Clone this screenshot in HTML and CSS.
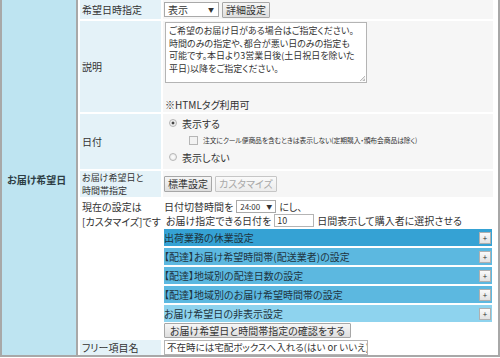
FILE: index.html
```html
<!DOCTYPE html>
<html>

<head>
    <title>お届け希望日</title>
    <link rel="stylesheet" href="styles.css">
</head>

<body>
    <div class="outer">
        <div class="side">お届け希望日</div>
        <div class="inner">
            <div class="label">希望日時指定</div>
            <div class="value row1">
                <span class="select"><span>表示</span><span class="arrow">▼</span></span>
                <button class="btn">詳細設定</button>
            </div>

            <div class="label">説明</div>
            <div class="value row2">
                <div class="memo">ご希望のお届け日がある場合はご指定ください。<br>時間のみの指定や、都合が悪い日のみの指定も<br>可能です。本日より3営業日後(土日祝日を除いた<br>平日)以降をご指定ください。<span class="grip"></span></div>
                <p class="note">※HTMLタグ利用可</p>
            </div>

            <div class="label">日付</div>
            <div class="value row3">
                <label class="opt"><span class="radio on"></span>表示する</label>
                <label class="opt sub"><span class="check"></span>注文にクール便商品を含むときは表示しない(定期購入・頒布会商品は除く)</label>
                <label class="opt"><span class="radio"></span>表示しない</label>
            </div>

            <div class="label two">お届け希望日と<br>時間帯指定</div>
            <div class="value row4">
                <button class="btn">標準設定</button>
                <button class="btn off">カスタマイズ</button>
            </div>

            <div class="label plain two">現在の設定は<br>[カスタマイズ]です</div>
            <div class="value plain row5">
                <div class="line">日付切替時間を <span class="select small"><span>24:00</span><span class="arrow">▼</span></span> にし、</div>
                <div class="line second">お届け指定できる日付を <span class="field">10</span> 日間表示して購入者に選択させる</div>
                <div class="bar active">出荷業務の休業設定<span class="plus">+</span></div>
                <div class="bar">【配達】お届け希望時間帯(配送業者)の設定<span class="plus">+</span></div>
                <div class="bar">【配達】地域別の配達日数の設定<span class="plus">+</span></div>
                <div class="bar">【配達】地域別のお届け希望時間帯の設定<span class="plus">+</span></div>
                <div class="bar light">お届け希望日の非表示設定<span class="plus">+</span></div>
                <button class="btn wide">お届け希望日と時間帯指定の確認をする</button>
            </div>

            <div class="label">フリー項目名</div>
            <div class="value plain row6">
                <span class="field long">不在時には宅配ボックスへ入れる(はい or いいえ)</span>
            </div>
        </div>
    </div>
</body>

</html>
```

FILE: styles.css
```css
body {
    margin: 0;
    background-color: #fff;
    font-family: "Noto Sans CJK JP", sans-serif;
    font-size: 10px;
    font-feature-settings: "palt";
    color: #333;
}

.outer {
    display: flex;
    width: 496px;
    height: 355px;
    border: 2px solid #a8a8a8;
    border-top: none;
}

.side {
    width: 76px;
    background-color: #bee4f1;
    border-right: 2px solid #a8a8a8;
    display: flex;
    align-items: center;
    padding: 4px 0 0 5px;
    box-sizing: border-box;
    font-weight: bold;
    color: #2d3d44;
}

.inner {
    flex: 1;
    display: grid;
    grid-template-columns: 81px 330px;
    grid-template-rows: 19px 91px 55px 26px 139px 15px;
    gap: 2px;
    padding: 0 2px;
}

.label {
    background-color: #e4f2f8;
    display: flex;
    align-items: center;
    padding-left: 2px;
    line-height: 13px;
}

.label.two {
    font-size: 9px;
    line-height: 13px;
}

.label.plain {
    background: none;
    align-items: flex-start;
    font-size: 10px;
    line-height: 15px;
}

.value {
    background-color: #f6f6f6;
    padding: 0 1px;
}

.value.plain {
    background: none;
}

.row1,
.row4 {
    display: flex;
    align-items: center;
    gap: 3px;
}

.select {
    display: inline-flex;
    align-items: center;
    justify-content: space-between;
    width: 55px;
    height: 15px;
    box-sizing: border-box;
    padding: 0 4px 0 3px;
    background-color: #fff;
    border: 1px solid #a9a9a9;
    line-height: 13px;
}

.select .arrow {
    font-size: 6px;
}

.select.small {
    width: 40px;
    height: 13px;
    font-size: 8px;
    padding: 0 3px;
}

.btn {
    font-family: inherit;
    font-size: 10px;
    font-feature-settings: "palt";
    color: #333;
    height: 16px;
    padding: 0 3px;
    line-height: 12px;
    background: linear-gradient(#f6f6f6, #dedede);
    border: 1px solid #a7a7a7;
    border-radius: 1px;
}

.btn.off {
    color: #a8a8a8;
    border-color: #c6c6c6;
    background: linear-gradient(#fafafa, #ececec);
}

.row2 {
    padding-top: 1px;
}

.memo {
    position: relative;
    width: 202px;
    height: 61px;
    box-sizing: border-box;
    margin-left: 1px;
    padding: 2px 3px;
    background-color: #fff;
    border: 1px solid #b4b4b4;
    font-size: 9px;
    line-height: 12.5px;
    white-space: nowrap;
    overflow: hidden;
}

.grip {
    position: absolute;
    right: 1px;
    bottom: 1px;
    width: 5px;
    height: 5px;
    background: linear-gradient(135deg, transparent 50%, #bbb 50%, transparent 65%, #bbb 80%);
}

.note {
    margin: 14px 0 0 1px;
}

.row3 {
    display: flex;
    flex-direction: column;
    padding-top: 2px;
    gap: 3px;
}

.opt {
    display: flex;
    align-items: center;
    height: 14px;
    padding-left: 5px;
}

.opt.sub {
    padding-left: 25px;
    font-size: 6.8px;
    letter-spacing: -0.1px;
}

.radio {
    width: 8px;
    height: 8px;
    border: 1px solid #b6b6b6;
    border-radius: 50%;
    background: radial-gradient(#fff, #e4e4e4);
    margin-right: 5px;
    box-sizing: border-box;
}

.radio.on {
    background: radial-gradient(#444 0 30%, #eee 40%);
}

.check {
    width: 7px;
    height: 7px;
    border: 1px solid #b6b6b6;
    background-color: #f2f2f2;
    margin-right: 5px;
}

.row5 {
    display: flex;
    flex-direction: column;
}

.line {
    height: 14px;
    display: flex;
    align-items: center;
    gap: 3px;
}

.line.second {
    height: 15px;
    padding-left: 2px;
}

.field {
    display: inline-block;
    width: 40px;
    height: 13px;
    box-sizing: border-box;
    padding: 0 2px;
    background-color: #fff;
    border: 1px solid #b4b4b4;
    font-size: 9px;
    line-height: 11px;
}

.field.long {
    width: 204px;
    height: 15px;
    font-size: 9.5px;
    line-height: 13px;
    overflow: hidden;
    white-space: nowrap;
}

.bar {
    display: flex;
    align-items: center;
    justify-content: space-between;
    height: 17px;
    margin-top: 2px;
    background-color: #5cb8e0;
    color: #1e3440;
    padding: 0 1px 0 0;
}

.bar.active {
    margin-top: 1px;
    background-color: #35a2d4;
}

.bar.light {
    background-color: #8ed3ee;
}

.plus {
    width: 12px;
    height: 12px;
    box-sizing: border-box;
    border: 1px solid #b0b0b0;
    background: linear-gradient(#fafafa, #e2e2e2);
    font-size: 8px;
    line-height: 10px;
    text-align: center;
    color: #333;
}

.btn.wide {
    align-self: flex-start;
    margin-top: 1px;
    height: 15px;
    padding: 0 5px;
}

.row6 {
    display: flex;
    align-items: center;
}
```
